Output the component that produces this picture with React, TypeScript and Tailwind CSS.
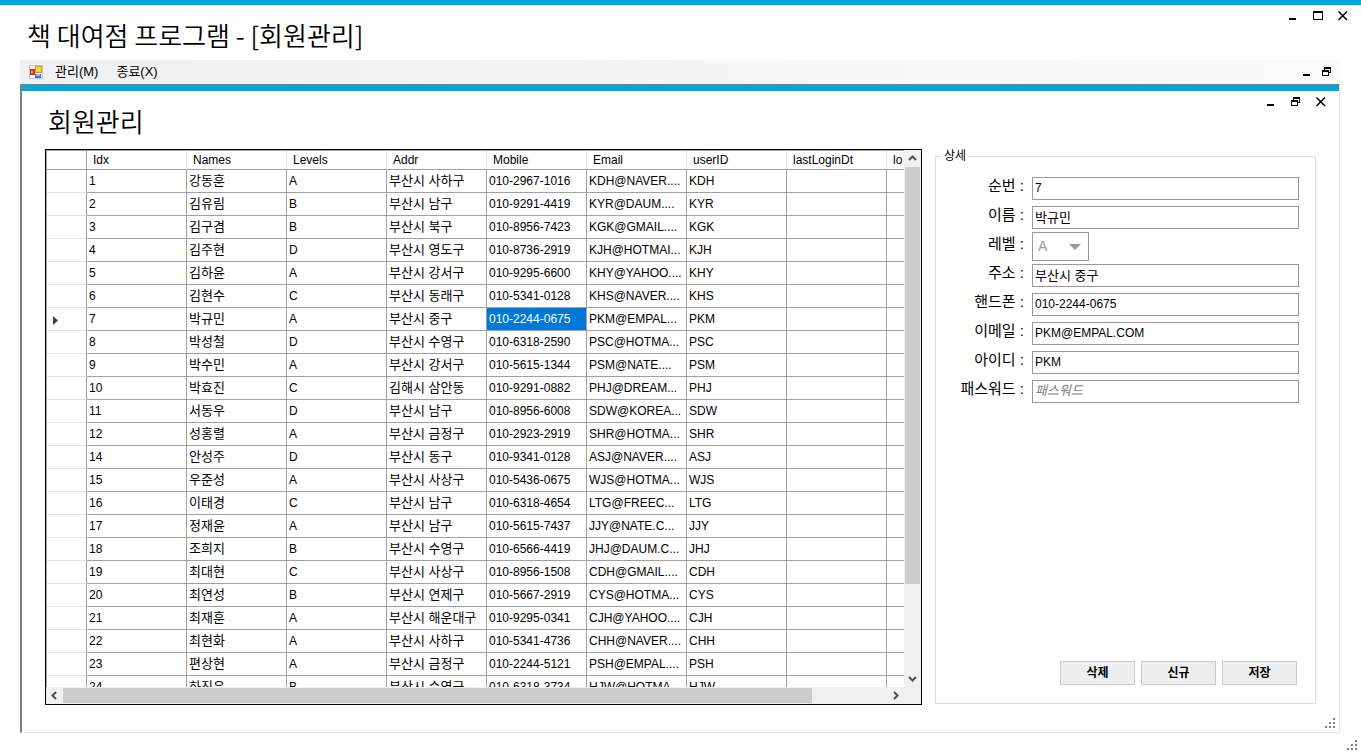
import type { ReactNode } from "react";

type Member = [idx: string, name: string, level: string, addr: string, mobile: string, email: string, userId: string];

const columns = ["Idx", "Names", "Levels", "Addr", "Mobile", "Email", "userID", "lastLoginDt", "lo"];

const members: Member[] = [
  ["1", "강동훈", "A", "부산시 사하구", "010-2967-1016", "KDH@NAVER....", "KDH"],
  ["2", "김유림", "B", "부산시 남구", "010-9291-4419", "KYR@DAUM....", "KYR"],
  ["3", "김구겸", "B", "부산시 북구", "010-8956-7423", "KGK@GMAIL....", "KGK"],
  ["4", "김주현", "D", "부산시 영도구", "010-8736-2919", "KJH@HOTMAI...", "KJH"],
  ["5", "김하윤", "A", "부산시 강서구", "010-9295-6600", "KHY@YAHOO....", "KHY"],
  ["6", "김현수", "C", "부산시 동래구", "010-5341-0128", "KHS@NAVER....", "KHS"],
  ["7", "박규민", "A", "부산시 중구", "010-2244-0675", "PKM@EMPAL...", "PKM"],
  ["8", "박성철", "D", "부산시 수영구", "010-6318-2590", "PSC@HOTMA...", "PSC"],
  ["9", "박수민", "A", "부산시 강서구", "010-5615-1344", "PSM@NATE....", "PSM"],
  ["10", "박효진", "C", "김해시 삼안동", "010-9291-0882", "PHJ@DREAM...", "PHJ"],
  ["11", "서동우", "D", "부산시 남구", "010-8956-6008", "SDW@KOREA...", "SDW"],
  ["12", "성홍렬", "A", "부산시 금정구", "010-2923-2919", "SHR@HOTMA...", "SHR"],
  ["14", "안성주", "D", "부산시 동구", "010-9341-0128", "ASJ@NAVER....", "ASJ"],
  ["15", "우준성", "A", "부산시 사상구", "010-5436-0675", "WJS@HOTMA...", "WJS"],
  ["16", "이태경", "C", "부산시 남구", "010-6318-4654", "LTG@FREEC...", "LTG"],
  ["17", "정재윤", "A", "부산시 남구", "010-5615-7437", "JJY@NATE.C...", "JJY"],
  ["18", "조희지", "B", "부산시 수영구", "010-6566-4419", "JHJ@DAUM.C...", "JHJ"],
  ["19", "최대현", "C", "부산시 사상구", "010-8956-1508", "CDH@GMAIL....", "CDH"],
  ["20", "최연성", "B", "부산시 연제구", "010-5667-2919", "CYS@HOTMA...", "CYS"],
  ["21", "최재훈", "A", "부산시 해운대구", "010-9295-0341", "CJH@YAHOO....", "CJH"],
  ["22", "최현화", "A", "부산시 사하구", "010-5341-4736", "CHH@NAVER....", "CHH"],
  ["23", "편상현", "A", "부산시 금정구", "010-2244-5121", "PSH@EMPAL....", "PSH"],
  ["24", "하진우", "B", "부산시 수영구", "010-6318-3734", "HJW@HOTMA...", "HJW"],
];

const selectedIdx = "7";

function MinimizeIcon() {
  return (
    <svg width="10" height="10" viewBox="0 0 10 10" shapeRendering="crispEdges" aria-hidden="true">
      <path d="M1 7h7v2H1z" fill="#000" />
    </svg>
  );
}

function MaximizeIcon() {
  return (
    <svg width="10" height="10" viewBox="0 0 10 10" shapeRendering="crispEdges" aria-hidden="true">
      <path d="M0 0h10v9H0zM1 2v6h8V2z" fillRule="evenodd" fill="#000" />
    </svg>
  );
}

function RestoreIcon() {
  return (
    <svg width="10" height="10" viewBox="0 0 10 10" shapeRendering="crispEdges" aria-hidden="true">
      <path d="M2 0h7v6H7V5h1V2H3v1H2z" fill="#000" />
      <path d="M0 3h7v6H0zM1 5v3h5V5z" fillRule="evenodd" fill="#000" />
    </svg>
  );
}

function CloseIcon() {
  return (
    <svg width="10" height="10" viewBox="0 0 10 10" aria-hidden="true">
      <path d="M0.500 0.500l8.500 8.500M9 0.500L0.500 9" stroke="#000" strokeWidth="1.5" fill="none" />
    </svg>
  );
}

function FormIcon() {
  return (
    <svg width="14" height="14" viewBox="0 0 14 14" aria-hidden="true">
      <rect x="0.5" y="0.5" width="13" height="13" fill="#f6f6f8" stroke="#c3c5cc" />
      <rect x="1" y="4" width="5" height="6" fill="#c8381c" />
      <rect x="2" y="6" width="2" height="2" fill="#ef9478" />
      <rect x="6" y="1" width="7" height="7" fill="#e0a010" />
      <rect x="7" y="2" width="5" height="5" fill="#fcd24c" />
      <rect x="6" y="9" width="6" height="4" fill="#3c78dc" />
      <rect x="7" y="9" width="4" height="2" fill="#8cb8f4" />
    </svg>
  );
}

function ResizeGrip() {
  return (
    <svg
      className="absolute right-1 bottom-1"
      width="10"
      height="10"
      viewBox="0 0 10 10"
      shapeRendering="crispEdges"
      aria-hidden="true"
    >
      <path d="M8 0h2v2H8zM8 4h2v2H8zM8 8h2v2H8zM4 4h2v2H4zM4 8h2v2H4zM0 8h2v2H0z" fill="#7f7f7f" />
    </svg>
  );
}

function ControlButton({ label, compact, children }: { label: string; compact?: boolean; children: ReactNode }) {
  return (
    <button
      type="button"
      aria-label={label}
      className={"flex h-[21px] items-center justify-center " + (compact ? "w-5" : "w-[25px]")}
    >
      {children}
    </button>
  );
}

function ScrollButton({ label, d }: { label: string; d: string }) {
  return (
    <button type="button" aria-label={label} className="flex size-[17px] shrink-0 items-center justify-center bg-[#f0f0f0]">
      <svg width="9" height="9" viewBox="0 0 9 9" aria-hidden="true">
        <path d={d} stroke="#505050" strokeWidth="2" fill="none" />
      </svg>
    </button>
  );
}

function MemberGrid() {
  return (
    <div className="grid min-h-0 min-w-0 flex-1 grid-cols-[minmax(0,1fr)_17px] grid-rows-[minmax(0,1fr)_17px] border border-black bg-[#f0f0f0]">
      <div className="overflow-hidden border-t border-l border-[#a0a0a0] bg-white">
        <table className="w-[940px] table-fixed border-separate border-spacing-0 text-left">
          <colgroup>
            <col className="w-10" />
            {columns.map((c) => (
              <col key={c} className="w-[100px]" />
            ))}
          </colgroup>
          <thead>
            <tr className="h-[19px]">
              <td className="border-r border-b border-[#a0a0a0] p-0" />
              {columns.map((c) => (
                <th
                  key={c}
                  scope="col"
                  className="border-r border-b border-r-[#e5e5e5] border-b-[#a0a0a0] p-0 pl-1.5 text-[12px] leading-[18px] font-normal"
                >
                  {c}
                </th>
              ))}
            </tr>
          </thead>
          <tbody>
            {members.map((m) => (
              <tr key={m[0]} className="h-[23px]">
                <td className="border-r border-b border-r-[#a0a0a0] border-b-[#e5e5e5] p-0 pl-1.5">
                  {m[0] === selectedIdx && (
                    <svg width="5" height="9" viewBox="0 0 5 9" className="mt-0.5" aria-hidden="true">
                      <path d="M0 0l5 4.500L0 9z" fill="#404040" />
                    </svg>
                  )}
                </td>
                {[...m, "", ""].map((value, i) => (
                  <td
                    key={i}
                    className={
                      "overflow-hidden border-r border-b border-[#a0a0a0] p-0 pl-0.5 leading-[22px] whitespace-nowrap " +
                      (i === 1 || i === 3 ? "text-[13px] " : "text-[12px] ") +
                      (i === 4 && m[0] === selectedIdx ? "bg-[#0078d7] text-white" : "")
                    }
                  >
                    {value}
                  </td>
                ))}
              </tr>
            ))}
          </tbody>
        </table>
      </div>
      <div className="flex flex-col">
        <ScrollButton label="위로 스크롤" d="M1 6l3.500-3.500L8 6" />
        <div className="min-h-0 flex-1 px-px">
          <div className="h-[83%] bg-[#cdcdcd]" />
        </div>
        <ScrollButton label="아래로 스크롤" d="M1 3l3.500 3.500L8 3" />
      </div>
      <div className="flex">
        <ScrollButton label="왼쪽으로 스크롤" d="M6 1L2.500 4.500L6 8" />
        <div className="min-w-0 flex-1 py-px">
          <div className="h-full w-10/11 bg-[#cdcdcd]" />
        </div>
        <ScrollButton label="오른쪽으로 스크롤" d="M3 1l3.500 3.500L3 8" />
      </div>
    </div>
  );
}

function Field({ id, label, children }: { id: string; label: string; children: ReactNode }) {
  return (
    <div className="grid h-[29px] grid-cols-[88px_minmax(0,1fr)] items-center gap-2">
      <label htmlFor={id} className="self-start text-right text-[15px] leading-6 whitespace-nowrap">
        {label} :
      </label>
      {children}
    </div>
  );
}

function TextField({ id, label, value, hangul }: { id: string; label: string; value?: string; hangul?: boolean }) {
  return (
    <Field id={id} label={label}>
      <input
        id={id}
        type="text"
        defaultValue={value}
        placeholder={value === undefined ? label : undefined}
        className={
          "h-[23px] w-full border border-[#999] bg-white px-0.5 pb-0.5 placeholder:text-[#808080] placeholder:italic " +
          (hangul ? "text-[13px]" : "text-[12px]")
        }
      />
    </Field>
  );
}

function DetailPanel() {
  return (
    <fieldset className="mb-px flex w-[381px] shrink-0 flex-col border border-[#dcdcdc]">
      <legend className="ml-1.5 px-0.5 text-[12px] leading-4">상세</legend>
      <form className="flex h-full flex-col justify-between pt-2.5 pr-4 pb-[18px]">
        <div>
          <TextField id="idx" label="순번" value="7" />
          <TextField id="name" label="이름" value="박규민" hangul />
          <Field id="level" label="레벨">
            <div className="relative w-[57px]">
              <select
                id="level"
                disabled
                defaultValue="A"
                className="block h-[29px] w-full appearance-none border border-[#999] bg-white pl-[5px] text-[14px] text-[#999] opacity-100"
              >
                <option>A</option>
                <option>B</option>
                <option>C</option>
                <option>D</option>
              </select>
              <svg className="pointer-events-none absolute top-3 right-2" width="12" height="6" viewBox="0 0 12 6" aria-hidden="true">
                <path d="M0 0h12L6 6z" fill="#999" />
              </svg>
            </div>
          </Field>
          <TextField id="addr" label="주소" value="부산시 중구" hangul />
          <TextField id="mobile" label="핸드폰" value="010-2244-0675" />
          <TextField id="email" label="이메일" value="PKM@EMPAL.COM" />
          <TextField id="userid" label="아이디" value="PKM" />
          <TextField id="password" label="패스워드" hangul />
        </div>
        <div className="flex justify-end gap-1.5 pr-0.5">
          {["삭제", "신규", "저장"].map((t) => (
            <button
              key={t}
              type="button"
              className="h-6 w-[75px] border border-[#ccc] bg-[#eee] text-[12px] leading-4 font-bold"
            >
              {t}
            </button>
          ))}
        </div>
      </form>
    </fieldset>
  );
}

export default function App() {
  return (
    <div className="relative flex h-screen flex-col border-t-[5px] border-[#00aad8] bg-white font-['Liberation_Sans','Noto_Sans_CJK_KR',sans-serif] text-black">
      <header className="flex h-[55px] shrink-0 items-start justify-between pr-1.5 pl-[27px]">
        <h1 className="self-end pb-[7px] font-['Noto_Sans_CJK_KR',sans-serif] text-[26px] leading-9 font-[350]">
          책 대여점 프로그램 - [회원관리]
        </h1>
        <div className="flex">
          <ControlButton label="최소화"><MinimizeIcon /></ControlButton>
          <ControlButton label="최대화"><MaximizeIcon /></ControlButton>
          <ControlButton label="닫기"><CloseIcon /></ControlButton>
        </div>
      </header>

      <div className="mr-[21px] mb-[21px] ml-5 flex min-h-0 flex-1 flex-col">
        <nav className="flex h-6 shrink-0 items-center justify-between bg-linear-to-r from-[#f0f0f0] to-[#fbfbfb] pr-[3px] pl-[9px]">
          <div className="flex items-center text-[13px] leading-5">
            <FormIcon />
            <a href="#manage" className="ml-3">관리(M)</a>
            <a href="#exit" className="ml-[18px]">종료(X)</a>
          </div>
          <div className="flex">
            <ControlButton label="창 최소화" compact><MinimizeIcon /></ControlButton>
            <ControlButton label="창 복원" compact><RestoreIcon /></ControlButton>
          </div>
        </nav>

        <section className="relative flex min-h-0 flex-1 flex-col border-t border-r border-b border-l-2 border-t-[#808080] border-r-[#e3e3e3] border-b-[#e3e3e3] border-l-[#808080]">
          <div className="flex h-[63px] shrink-0 items-start justify-between border-t-[6px] border-[#00aad8] pr-1.5 pl-[26px]">
            <h2 className="self-end pb-[9px] font-['Noto_Sans_CJK_KR',sans-serif] text-[26px] leading-9 font-[350]">회원관리</h2>
            <div className="flex">
              <ControlButton label="회원관리 최소화"><MinimizeIcon /></ControlButton>
              <ControlButton label="회원관리 복원"><RestoreIcon /></ControlButton>
              <ControlButton label="회원관리 닫기"><CloseIcon /></ControlButton>
            </div>
          </div>
          <main className="flex min-h-0 flex-1 gap-[13px] px-[23px] pb-[27px]">
            <div className="flex min-w-0 flex-1 flex-col pt-px">
              <MemberGrid />
            </div>
            <DetailPanel />
          </main>
          <ResizeGrip />
        </section>
      </div>
      <ResizeGrip />
    </div>
  );
}
